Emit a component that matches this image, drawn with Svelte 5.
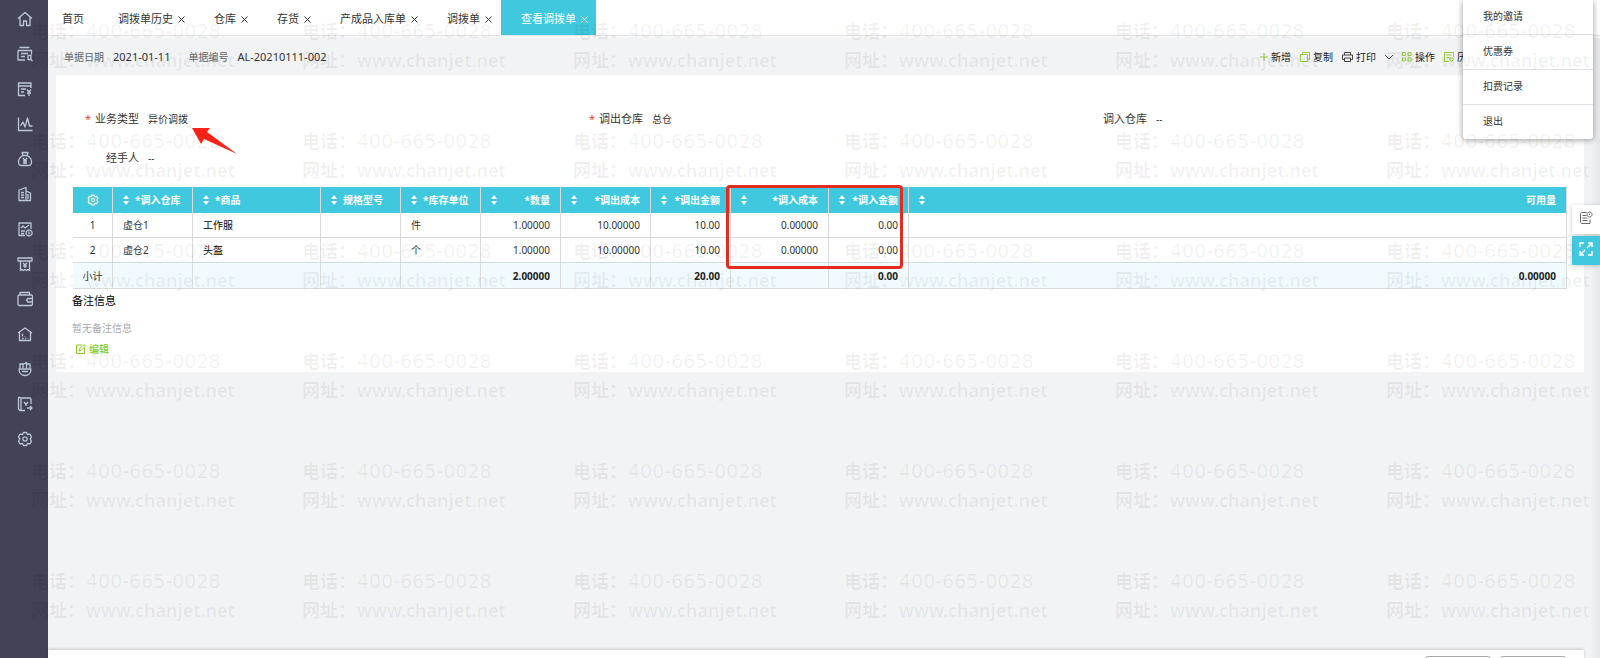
<script>
  const navItems = [
    { label: '首页', d: 'M1 7.5 8 1.5l7 6M3 6v8.5h3.5V10h3v4.5H13V6' },
    { label: '采购', d: 'M2.5 1.5h10M1 4.5h13.5v4M1 4.5v9.5h7M4 7.5h7M4 10.5h4M14 9.5h-3v4h3zM14 13.5l1.5 1.5' },
    { label: '销售', d: 'M14 7V2H1.500v12.500H8M1.500 5H14M4 8h5M4 11h3M10 8.500l2 2.500 2-2.500M12 11v4M10 12h4' },
    { label: '分析', d: 'M1.500 1.500v13H15.500M3.500 10l2.500-4 2 5 2.500-9 2 8h3' },
    { label: '资金', d: 'M5 1.500h6L10 4.500H6zM6 4.500C2 6.500 1.500 9 1.500 11s1 3.500 3 3.500h7c2 0 3-1.500 3-3.500S14 6.500 10 4.500M6 7l2 2.500L10 7M8 9.500V13M6 10h4M6 12h4' },
    { label: '资产', d: 'M2 14.500V4l7-2.500v13zM9 5l4.500 2v7.500H2M4 6.500h3M4 9h3M4 11.500h3M11 8v5' },
    { label: '报表', d: 'M14 8V2H2v12.500h6M4 7l2-2 2 2 4-3M4 10h4M4 12.500h3M12 9a3 3 0 1 0 .1 0M12 10.500v3' },
    { label: '票据', d: 'M1 2h14v3H1zM3.500 5v9.500l1.500-1 1.500 1 1.500-1 1.500 1 1.500-1 1.500 1V5M6 7l2 2 2-2M8 9v3M6 10h4' },
    { label: '钱包', d: 'M3 3.500V1.500h9.500V4M2 4h12.500l1 1v8.500l-1 1H2l-1-1V5zM15.500 7.500H11L9.500 9.200 11 11h4.500' },
    { label: '库存', d: 'M1 7l7-5 7 5M2.500 6v8.500h11V6M5.500 7.500v3M5 12.500h1.500M8 10v.500M8 12.500h1M11 12.500v.500' },
    { label: '服务', d: 'M3 7V3h3v4M6 3.500 9.500 1.500V7M10 3h3v4M1.500 8h13M2 8c0 4 2.500 6.500 6 6.500s6-2.500 6-6.500M5 10.500h6' },
    { label: '收藏', d: 'M14 8V3l-1-1H4L3 1.500H1.500v11.500l1.500 1.500H8M4 2v12M7 6l2 2.500L11 6M9 8.500V10M10 12h5M13 10l2 2-2 2' },
    { label: '设置', d: 'M5.500 3.500 6.500 1.500h3l1 2 2.500-.300 1.500 2.600L13.200 8l1.300 2.200-1.500 2.600-2.500-.300-1 2h-3l-1-2-2.500.300-1.500-2.600L2.800 8 1.500 5.800 3 3.200zM8 5.800a2.200 2.200 0 1 0 .1 0' }
  ];

  const tabs = ['调拨单历史', '仓库', '存货', '产成品入库单', '调拨单', '查看调拨单'];
  let activeTab = $state('查看调拨单');

  const tools = [
    { label: '新增', icon: 'add' },
    { label: '复制', icon: 'copy' },
    { label: '打印', icon: 'print' },
    { label: '操作', icon: 'grid' },
    { label: '历史', icon: 'history' }
  ];

  const menuItems = ['我的邀请', '优惠券', '扣费记录', '退出'];

  const fields = [
    { label: '业务类型', value: '异价调拨', required: true },
    { label: '调出仓库', value: '总仓', required: true },
    { label: '调入仓库', value: '--', required: false },
    { label: '经手人', value: '--', required: false }
  ];

  const columns = [
    { key: 'warehouse', label: '调入仓库', required: true, width: 80 },
    { key: 'goods', label: '商品', required: true, width: 128 },
    { key: 'spec', label: '规格型号', width: 80 },
    { key: 'unit', label: '库存单位', required: true, width: 80 },
    { key: 'qty', label: '数量', required: true, width: 80, number: true },
    { key: 'outCost', label: '调出成本', required: true, width: 90, number: true },
    { key: 'outAmount', label: '调出金额', required: true, width: 80, number: true },
    { key: 'inCost', label: '调入成本', required: true, width: 98, number: true },
    { key: 'inAmount', label: '调入金额', required: true, width: 80, number: true },
    { key: 'available', label: '可用量', number: true }
  ];

  const rows = [
    { warehouse: '虚仓1', goods: '工作服', unit: '件', qty: '1.00000', outCost: '10.00000', outAmount: '10.00', inCost: '0.00000', inAmount: '0.00' },
    { warehouse: '虚仓2', goods: '头盔', unit: '个', qty: '1.00000', outCost: '10.00000', outAmount: '10.00', inCost: '0.00000', inAmount: '0.00' }
  ];

  const totals = { qty: '2.00000', outAmount: '20.00', inAmount: '0.00', available: '0.00000' };

  const marks = Array.from({ length: 36 }, (_, i) => i);
</script>

<div class="shell">
  <nav class="sidebar" aria-label="主导航">
    {#each navItems as item}
      <a href="#nav" aria-label={item.label}>
        <svg width="16" height="16" viewBox="0 0 16 16"><path d={item.d} /></svg>
      </a>
    {/each}
  </nav>

  <div class="main">
    <header class="tabs">
      <button class="tab home">首页</button>
      {#each tabs as tab}
        <div class="tab" class:active={tab === activeTab}>
          <button onclick={() => (activeTab = tab)}>{tab}</button>
          <button class="close" aria-label="关闭{tab}">
            <svg width="7" height="7" viewBox="0 0 7 7"><path d="M.5.5l6 6M6.500.5l-6 6" /></svg>
          </button>
        </div>
      {/each}
    </header>

    <div class="doc-bar">
      <dl class="doc-info">
        <dt>单据日期</dt>
        <dd>2021-01-11</dd>
        <dt>单据编号</dt>
        <dd>AL-20210111-002</dd>
      </dl>
      <div class="tools">
        {#each tools as tool}
          <button class="tool {tool.icon}">
            {#if tool.icon === 'add'}
              <svg width="8" height="10" viewBox="0 0 8 10"><path d="M4 1v8M0 5h8" /></svg>
            {:else if tool.icon === 'copy'}
              <svg width="10" height="10" viewBox="0 0 10 10"><path d="M2.500 2.500V.5h7v7h-2M.5 2.500h7v7h-7z" /></svg>
            {:else if tool.icon === 'print'}
              <svg width="11" height="10" viewBox="0 0 11 10"><path d="M2.500 3V.5h6V3M2.500 7.500h-2V3h10v4.500h-2M2.500 6h6v3.500h-6z" /></svg>
            {:else if tool.icon === 'grid'}
              <svg width="10" height="10" viewBox="0 0 10 10"><path d="M.5.5h3v3h-3zM6 .5h3v3H6zM.5 6h3v3h-3zM6 6h3v3H6z" /></svg>
            {:else}
              <svg width="10" height="10" viewBox="0 0 10 10"><path d="M9.500 5V.5h-9v9H5M2.500 3h5M2.500 5.500h3M6 6h3v2L7.500 9.500 6 8z" /></svg>
            {/if}
            {tool.label}
          </button>
          {#if tool.icon === 'print'}
            <button class="tool more" aria-label="打印选项">
              <svg width="8" height="10" viewBox="0 0 8 10"><path d="M0 3 4 7 8 3" /></svg>
            </button>
          {/if}
        {/each}
      </div>
    </div>

    <main class="card">
      <dl class="fields">
        {#each fields as field}
          <div class="field">
            <dt>{#if field.required}<span class="star">*</span>{/if}{field.label}</dt>
            <dd>{field.value}</dd>
          </div>
        {/each}
      </dl>
      <svg class="arrow" width="46" height="28" viewBox="0 0 46 28" aria-hidden="true">
        <path d="M0 0 18 0 15 4 45 26 12 11 9 16Z" />
      </svg>

      <div class="table-wrap">
        <table>
          <colgroup>
            <col style="width: 40px" />
            {#each columns as col}
              <col style={col.width ? `width: ${col.width}px` : ''} />
            {/each}
          </colgroup>
          <thead>
            <tr>
              <th class="index">
                <svg class="gear" width="12" height="12" viewBox="0 0 16 16" role="img" aria-label="列设置"><path d={navItems[12].d} /></svg>
              </th>
              {#each columns as col}
                <th>
                  <div class="head" class:number={col.number}>
                    <svg class="sort" width="6" height="10" viewBox="0 0 6 10"><path d="M3 0l3 4H0zM3 10l3-4H0z" /></svg>
                    <span>{col.required ? '*' : ''}{col.label}</span>
                  </div>
                </th>
              {/each}
            </tr>
          </thead>
          <tbody>
            {#each rows as row, i}
              <tr>
                <td class="index">{i + 1}</td>
                {#each columns as col}
                  <td class:number={col.number} class:dark={col.key === 'goods'}>{row[col.key] ?? ''}</td>
                {/each}
              </tr>
            {/each}
          </tbody>
          <tfoot>
            <tr>
              <td class="index">小计</td>
              {#each columns as col}
                <td class:number={col.number}>{totals[col.key] ?? ''}</td>
              {/each}
            </tr>
          </tfoot>
        </table>
        <div class="highlight"></div>
      </div>

      <section class="remark">
        <h2>备注信息</h2>
        <p>暂无备注信息</p>
        <button>
          <svg width="10" height="10" viewBox="0 0 10 10"><path d="M6 1H.5v8.500h8V4M3 7l.5-2L8 .5 9.500 2 5 6.500z" /></svg>
          编辑
        </button>
      </section>
    </main>

    <footer class="bottom-bar">
      <button aria-label="上一张"></button>
      <button aria-label="下一张"></button>
    </footer>
  </div>

  <div class="menu">
    {#each menuItems as item}
      <button>{item}</button>
    {/each}
  </div>

  <div class="side-tools">
    <button aria-label="单据记录">
      <svg width="14" height="14" viewBox="0 0 14 14"><path d="M7.500 1.500h-5l-1 1v9l1 1h8.500V8.500M3.500 4.500h4M3.500 7h5M3.500 9.500h5M10.500 1a2.500 2.500 0 1 0 .1 0M10.500 2.500v1.500" /></svg>
    </button>
    <button class="expand" aria-label="全屏">
      <svg width="14" height="14" viewBox="0 0 14 14"><path d="M5 1H1v4M9 1h4v4M13 9v4H9M1 9v4h4M13 1 8 6M1 13l5-5" /></svg>
    </button>
  </div>

  <div class="watermark" aria-hidden="true">
    {#each marks as mark (mark)}
      <div class="mark">
        <span>电话：</span><span class="phone">400-665-0028</span>
        <span>网址：</span><span>www.chanjet.net</span>
      </div>
    {/each}
  </div>
</div>

<style>
  :global(body) {
    background: #f2f3f5;
  }

  .shell {
    position: relative;
    display: flex;
    height: 100vh;
    overflow: hidden;
    font-family: 'Noto Sans', 'Noto Sans CJK SC', sans-serif;
    font-size: 10px;
    line-height: 16px;
    color: #333;
    background: linear-gradient(to left, #e6e7ea, #f2f3f5 10px);
  }

  button {
    display: flex;
    align-items: center;
    padding: 0;
    border: 0;
    background: none;
    color: inherit;
    font: inherit;
    cursor: pointer;
  }

  dl,
  dd,
  h2,
  p {
    margin: 0;
  }

  svg {
    flex: none;
    fill: none;
    stroke: currentColor;
  }

  .sidebar {
    flex: 0 0 48px;
    display: flex;
    flex-direction: column;
    padding-top: 1px;
    box-sizing: border-box;
    background: #434257;
  }

  .sidebar a {
    display: flex;
    align-items: center;
    justify-content: center;
    height: 35px;
    padding-left: 1px;
    color: #bcc8d8;
  }

  .sidebar svg {
    stroke-width: 1.3;
    stroke-linejoin: round;
  }

  .main {
    flex: 1;
    min-width: 0;
    display: flex;
    flex-direction: column;
  }

  .tabs {
    display: flex;
    gap: 1px;
    height: 35px;
    background: #fff;
    border-bottom: 1px solid #e3e4e6;
    box-shadow: 0 2px 0 #f8f8f9;
    font-size: 11px;
  }

  .tab {
    display: flex;
    align-items: center;
    gap: 5px;
    padding: 3px 8px 0 20px;
  }

  .tab.home {
    width: 49px;
    padding: 3px 0 0 14px;
  }

  .tab.active {
    background: #40c8de;
    color: #fff;
  }

  .doc-bar {
    display: flex;
    align-items: center;
    justify-content: space-between;
    height: 39px;
    padding: 2px 123px 0 16px;
    box-sizing: border-box;
  }

  .doc-info {
    display: flex;
    align-items: center;
  }

  .doc-info dt {
    color: #666;
  }

  .doc-info dd {
    margin: 0 18px 0 9px;
    font-size: 11px;
  }

  .tools {
    display: flex;
    gap: 9px;
  }

  .tool {
    gap: 3px;
    color: #222;
  }

  .tool svg {
    color: #8fcc3f;
  }

  .tool.print svg,
  .tool.more svg {
    color: #444;
  }

  .card {
    position: relative;
    margin: 0 16px 0 8px;
    padding: 28px 0 15px 16px;
    background: #fff;
  }

  .fields {
    display: grid;
    grid-template-columns: repeat(3, 1fr);
    row-gap: 7px;
  }

  .field {
    display: flex;
    align-items: center;
    height: 32px;
  }

  .field dt {
    width: 67px;
    font-size: 11px;
    text-align: right;
  }

  .field dd {
    margin-left: 9px;
  }

  .star {
    margin-right: 4px;
    color: #e8453c;
  }

  .arrow {
    position: absolute;
    left: 136px;
    top: 53px;
    fill: #fb2216;
    stroke: none;
  }

  .table-wrap {
    position: relative;
    margin: 13px 17px 0 1px;
  }

  table {
    width: 100%;
    table-layout: fixed;
    border-collapse: separate;
    border-spacing: 0;
  }

  tr {
    height: 25px;
  }

  thead tr,
  tfoot tr {
    height: 26px;
  }

  th,
  td {
    padding: 0 10px;
    border-right: 1px solid #d9dadc;
    text-align: left;
    line-height: 16px;
    white-space: nowrap;
  }

  th {
    background: #40c8de;
    color: #fff;
  }

  td {
    border-bottom: 1px solid #d9dadc;
  }

  td.number {
    text-align: right;
  }

  td.dark {
    color: #000;
  }

  th.index,
  td.index {
    padding: 0;
    text-align: center;
  }

  .gear {
    display: block;
    margin: 0 auto;
    stroke-width: 1.5;
  }

  .head {
    display: flex;
    align-items: center;
    gap: 6px;
  }

  .head.number {
    justify-content: space-between;
  }

  .sort {
    fill: #fff;
    stroke: none;
  }

  tfoot td {
    background: #f1fbff;
  }

  tfoot td.number {
    color: #222;
    font-weight: 700;
  }

  .highlight {
    position: absolute;
    left: 653px;
    top: -2px;
    width: 171px;
    height: 78px;
    border: 3px solid #e32b20;
    border-radius: 4px;
  }

  .remark h2 {
    margin-top: 4px;
    font-size: 11px;
    font-weight: 400;
    color: #000;
  }

  .remark p {
    margin-top: 11px;
    color: #aaa;
  }

  .remark button {
    gap: 3px;
    margin: 5px 0 0 4px;
    color: #86cb1c;
    font-weight: 500;
  }

  .bottom-bar {
    display: flex;
    justify-content: flex-end;
    gap: 9px;
    height: 34px;
    margin: auto 16px -26px 0;
    padding: 6px 18px 0 0;
    box-sizing: border-box;
    background: #fff;
    box-shadow: 0 -1px 3px rgba(0, 0, 0, 0.18);
  }

  .bottom-bar button {
    width: 66px;
    height: 24px;
    border: 1px solid #aaa;
    border-radius: 3px;
  }

  .menu {
    position: absolute;
    top: 0;
    right: 7px;
    width: 130px;
    background: #fff;
    border-radius: 0 0 3px 3px;
    box-shadow: 0 1px 6px rgba(0, 0, 0, 0.4);
  }

  .menu button {
    width: 100%;
    height: 34px;
    padding: 0 0 2px 20px;
  }

  .menu button + button {
    height: 35px;
    border-top: 1px solid #e1e2e4;
  }

  .side-tools {
    position: absolute;
    top: 205px;
    right: 0;
    display: flex;
    flex-direction: column;
    gap: 2px;
  }

  .side-tools button {
    justify-content: center;
    width: 28px;
    height: 29px;
    padding-bottom: 4px;
    background: #fff;
    box-shadow: 0 1px 5px rgba(0, 0, 0, 0.2);
    color: #666;
  }

  .side-tools .expand {
    background: #40c8de;
    color: #fff;
  }

  .expand svg {
    stroke-width: 1.5;
  }

  .watermark {
    position: absolute;
    inset: 0;
    display: grid;
    grid-template-columns: repeat(6, 271px);
    grid-auto-rows: 110px;
    padding: 17px 0 0 31px;
    overflow: hidden;
    pointer-events: none;
    color: rgba(0, 0, 0, 0.06);
    font-size: 18px;
    font-weight: 600;
    line-height: 29px;
  }

  .mark {
    display: grid;
    grid-template-columns: 55px 1fr;
    align-content: start;
    white-space: nowrap;
  }

  .phone {
    font-family: 'DejaVu Sans', sans-serif;
    font-size: 19px;
    font-weight: 400;
  }
</style>
